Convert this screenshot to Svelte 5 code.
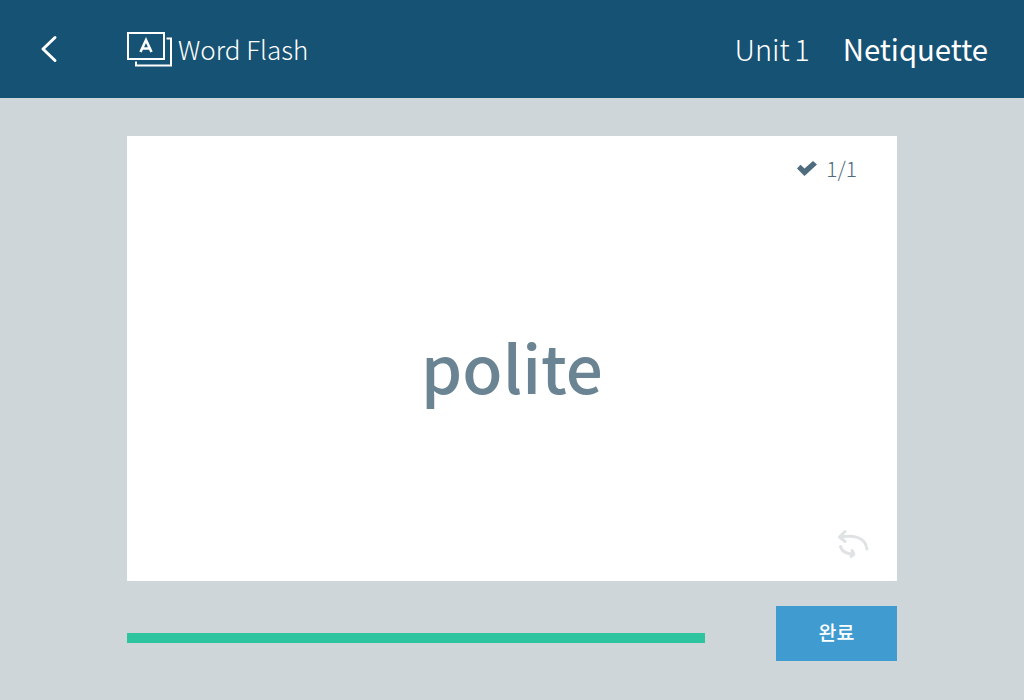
<script>
  let word = "polite";
  let progress = 100;
</script>

<div class="page">
  <header class="topbar">
    <button class="back" aria-label="Back">
      <svg width="18" height="28" viewBox="0 0 18 28" fill="none" stroke="#fff" stroke-width="3" stroke-linecap="round" stroke-linejoin="round">
        <path d="M15 2.500 L3 14 L15 25.500" />
      </svg>
    </button>
    <div class="title">
      <svg class="logo" width="46" height="36" viewBox="0 0 46 36" fill="none" stroke="#fff" stroke-width="2">
        <rect x="1" y="1" width="36" height="26" />
        <path d="M39.500 6.500 H44 V33.500 H9 V29.500" />
        <path d="M13.500 20 L19 8 L24.500 20 M15.500 16.500 H22.500" stroke-width="2.600" />
      </svg>
      <span class="name">Word Flash</span>
    </div>
    <div class="unit">Unit 1</div>
    <div class="lesson">Netiquette</div>
  </header>

  <main class="content">
    <section class="card">
      <div class="count">
        <svg width="20" height="15" viewBox="0 0 20 15" fill="#4f6b7e">
          <path d="M0 7.500 L3.500 3.800 L7.500 7.500 L16 0 L20 3.500 L7.500 15 Z" />
        </svg>
        <span>1/1</span>
      </div>
      <div class="word">{word}</div>
      <div class="flip">
        <svg width="32" height="30" viewBox="0 0 32 30" fill="none" stroke="#e0e3e4" stroke-width="3" stroke-linecap="round" stroke-linejoin="round">
          <path d="M7 2.500 L1.500 8 L7 12.500" />
          <path d="M2 8 C14 6 27 7 29 20" />
          <path d="M2.500 17.500 C4 23 9 25 15 25" />
          <path d="M13 27.500 L16 25 L14 21.500" />
        </svg>
      </div>
    </section>

    <div class="footer">
      <div class="track">
        <div class="fill" style="width: {progress}%"></div>
      </div>
      <button class="done">완료</button>
    </div>
  </main>
</div>

<style>
  :global(body) {
    margin: 0;
    background: #cfd6d9;
  }

  .page {
    height: 700px;
    background: #cfd6d9;
    font-family: "Noto Sans CJK KR", "Noto Sans", sans-serif;
  }

  .topbar {
    display: flex;
    align-items: center;
    height: 98px;
    padding: 0 36px 0 40px;
    background: #165273;
    color: #fff;
    box-sizing: border-box;
  }

  .back {
    display: flex;
    width: 87px;
    padding: 0;
    border: 0;
    background: none;
    cursor: pointer;
  }

  .title {
    display: flex;
    align-items: center;
    flex: 1;
    font-size: 26px;
    font-weight: 300;
  }

  .logo {
    margin-right: 5px;
    margin-top: 1px;
  }

  .name {
    margin-top: -2px;
  }

  .unit {
    font-size: 29px;
    font-weight: 300;
    margin-right: 33px;
    word-spacing: -2px;
    margin-top: -2px;
  }

  .lesson {
    font-size: 29.300px;
    font-weight: 400;
    margin-top: -2px;
  }

  .content {
    width: 770px;
    margin: 0 auto;
    padding-top: 38px;
  }

  .card {
    position: relative;
    display: flex;
    align-items: center;
    justify-content: center;
    height: 445px;
    background: #fff;
  }

  .count {
    position: absolute;
    top: 17px;
    right: 40px;
    display: flex;
    align-items: center;
    gap: 9px;
    font-size: 21px;
    font-weight: 300;
    color: #4f6b7e;
  }

  .word {
    font-size: 65.500px;
    font-weight: 500;
    line-height: 1;
    margin-top: 14px;
    color: #6b8494;
  }

  .flip {
    position: absolute;
    right: 27px;
    bottom: 22px;
    display: flex;
  }

  .footer {
    display: flex;
    align-items: center;
    justify-content: space-between;
    margin-top: 25px;
  }

  .track {
    width: 578px;
    height: 10px;
    margin-top: 9px;
  }

  .fill {
    height: 100%;
    background: #2fc4a0;
  }

  .done {
    width: 121px;
    height: 55px;
    padding: 0 0 4px;
    border: 0;
    background: #3f9bd0;
    color: #fff;
    font-family: inherit;
    font-size: 19.500px;
    font-weight: 500;
    cursor: pointer;
  }
</style>
